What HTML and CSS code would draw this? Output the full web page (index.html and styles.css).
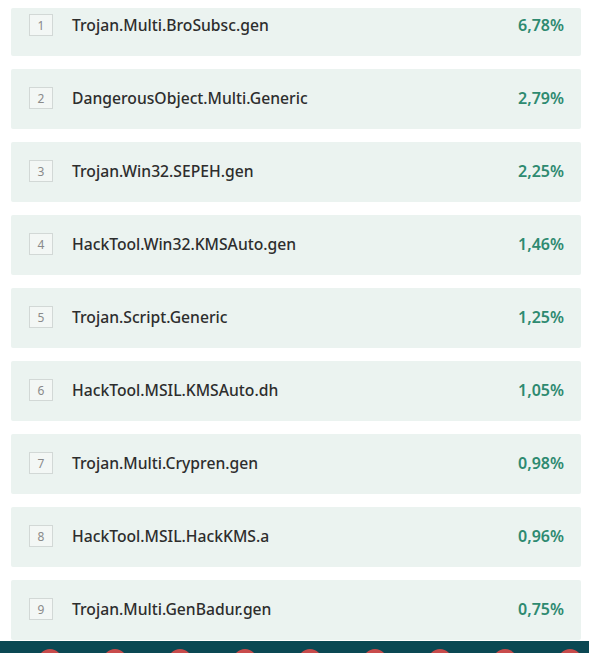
FILE: index.html
```html
<!DOCTYPE html>
<html lang="en">
<head>
<meta charset="UTF-8" />
<meta name="viewport" content="width=device-width, initial-scale=1" />
<title>Top threats</title>
<link rel="stylesheet" href="styles.css">
</head>
<body>

<!-- Ranking list -->
<ol class="rating">
  <li class="row cut"><span class="num">1</span><span class="name">Trojan.Multi.BroSubsc.gen</span><span class="pct">6,78%</span></li>
  <li class="row"><span class="num">2</span><span class="name">DangerousObject.Multi.Generic</span><span class="pct">2,79%</span></li>
  <li class="row"><span class="num">3</span><span class="name">Trojan.Win32.SEPEH.gen</span><span class="pct">2,25%</span></li>
  <li class="row"><span class="num">4</span><span class="name">HackTool.Win32.KMSAuto.gen</span><span class="pct">1,46%</span></li>
  <li class="row"><span class="num">5</span><span class="name">Trojan.Script.Generic</span><span class="pct">1,25%</span></li>
  <li class="row"><span class="num">6</span><span class="name">HackTool.MSIL.KMSAuto.dh</span><span class="pct">1,05%</span></li>
  <li class="row"><span class="num">7</span><span class="name">Trojan.Multi.Crypren.gen</span><span class="pct">0,98%</span></li>
  <li class="row"><span class="num">8</span><span class="name">HackTool.MSIL.HackKMS.a</span><span class="pct">0,96%</span></li>
  <li class="row"><span class="num">9</span><span class="name">Trojan.Multi.GenBadur.gen</span><span class="pct">0,75%</span></li>
</ol>

<!-- Footer strip with dots -->
<footer class="strip">
  <span class="dot"></span><span class="dot"></span><span class="dot"></span>
  <span class="dot"></span><span class="dot"></span><span class="dot"></span>
  <span class="dot"></span><span class="dot"></span><span class="dot"></span>
</footer>

</body>
</html>
```

FILE: styles.css
```css
* {
  box-sizing: border-box;
}
body {
  margin: 0;
  background: #fff;
  font-family: 'Noto Sans', sans-serif;
  color: #2d2d2d;
  height: 653px;
  overflow: hidden;
}

/* List */
.rating {
  list-style: none;
  margin: 0;
  padding: 0 8px 0 11px;
  display: flex;
  flex-direction: column;
  gap: 13px;
}
.row {
  display: flex;
  align-items: center;
  height: 60px;
  background: #ebf3f0;
  border-radius: 2px;
  padding: 0 17px 2px 18px;
}
.row.cut {
  height: 48px;
  margin-top: 8px;
  padding-bottom: 14px;
}
.num {
  width: 24px;
  height: 22px;
  border: 1px solid #d2d8d6;
  background: #f3f7f5;
  color: #8a8a8a;
  font-size: 12px;
  display: flex;
  align-items: center;
  justify-content: center;
  flex-shrink: 0;
}
.name {
  margin-left: 19px;
  font-size: 15.7px;
  font-weight: 500;
  flex-grow: 1;
}
.pct {
  color: #2e8a70;
  font-size: 16px;
  font-weight: 600;
}

/* Bottom strip */
.strip {
  margin-top: 1px;
  height: 12px;
  background: #0b4853;
  overflow: hidden;
  display: flex;
  gap: 41px;
  padding: 8px 0 0 38px;
}
.dot {
  width: 24px;
  height: 24px;
  border-radius: 50%;
  background: #c84b4b;
  flex-shrink: 0;
}
```
